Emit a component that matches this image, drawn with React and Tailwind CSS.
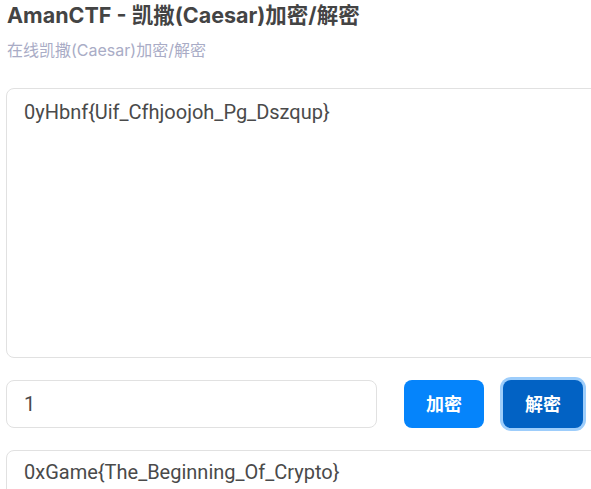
import { useState } from "react";

const shift = (s, n) =>
  s.replace(/[a-z]/gi, (c) => {
    const base = c <= "Z" ? 65 : 97;
    return String.fromCharCode(((c.charCodeAt(0) - base + n + 26 * 10) % 26) + base);
  });

const App = () => {
  const [input, setInput] = useState("0yHbnf{Uif_Cfhjoojoh_Pg_Dszqup}");
  const [key, setKey] = useState("1");
  const [output, setOutput] = useState("0xGame{The_Beginning_Of_Crypto}");

  const run = (dir) => setOutput(shift(input, dir * (parseInt(key) || 0)));

  return (
    <div className="w-full h-screen overflow-hidden bg-white" style={{ fontFamily: "Inter, 'Noto Sans CJK SC', sans-serif" }}>
      <div className="w-[640px] pl-[6px]">
        <h1 className="pt-[1px] pl-[1px] text-[21.5px] leading-[28px] font-bold text-[#444]">
          AmanCTF - 凯撒(Caesar)加密/解密
        </h1>
        <p className="mt-[9px] pl-[1px] text-[16px] leading-[24px] text-[#a9acc6]">在线凯撒(Caesar)加密/解密</p>

        <textarea
          value={input}
          onChange={(e) => setInput(e.target.value)}
          className="mt-[26px] block w-full h-[270px] resize-none rounded-[8px] border border-[#e1e1e1] px-[17px] py-[8px] text-[20px] leading-[30px] text-[#4a4a4a] outline-none"
          style={{ fontFamily: "Roboto, 'Noto Sans CJK SC', sans-serif" }}
        />

        <div className="mt-[22px] flex items-center">
          <input
            value={key}
            onChange={(e) => setKey(e.target.value)}
            className="w-[371px] h-[48px] rounded-[8px] border border-[#e1e1e1] px-[17px] text-[20px] text-[#4a4a4a] outline-none"
            style={{ fontFamily: "Roboto, sans-serif" }}
          />
          <button
            onClick={() => run(1)}
            className="ml-[27px] w-[80px] h-[48px] rounded-[8px] bg-[#0584fb] text-white text-[18px] font-bold"
          >
            加密
          </button>
          <button
            onClick={() => run(-1)}
            className="ml-[19px] w-[80px] h-[48px] rounded-[8px] bg-[#0262c4] text-white text-[18px] font-bold shadow-[0_0_0_3px_#9dcdfb]"
          >
            解密
          </button>
        </div>

        <textarea
          value={output}
          readOnly
          className="mt-[22px] block w-full h-[200px] resize-none rounded-[8px] border border-[#e1e1e1] px-[17px] pt-[6px] text-[20px] leading-[30px] text-[#4a4a4a] outline-none"
          style={{ fontFamily: "Roboto, 'Noto Sans CJK SC', sans-serif" }}
        />
      </div>
    </div>
  );
};

export default App;
